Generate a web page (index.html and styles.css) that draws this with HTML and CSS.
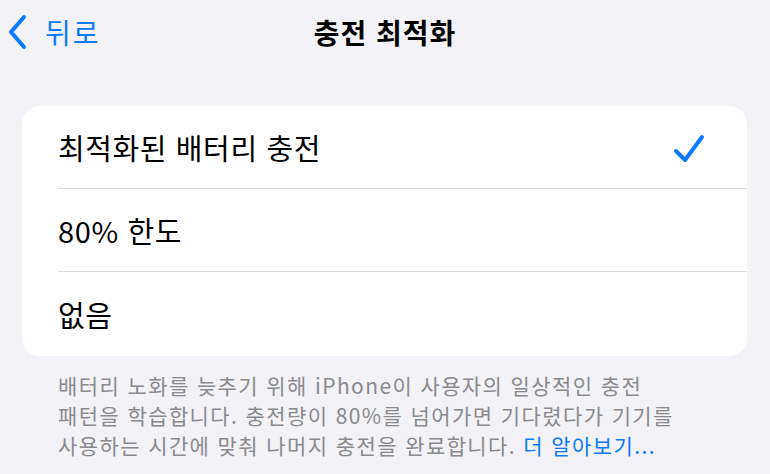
FILE: index.html
```html
<!DOCTYPE html>
<html lang="ko">
<head>
<meta charset="utf-8">
<link rel="stylesheet" href="styles.css">
</head>
<body>
<div class="screen">
  <header class="nav">
    <a class="back">
      <svg class="chev" width="22" height="38" viewBox="0 0 22 38"><path d="M18 4 L5 19 L18 34" fill="none" stroke="#0a7aff" stroke-width="4" stroke-linecap="round" stroke-linejoin="round"/></svg>
      <span class="back-label">뒤로</span>
    </a>
    <h1 class="title">충전 최적화</h1>
  </header>
  <section class="card">
    <div class="row"><span class="row-label">최적화된 배터리 충전</span>
      <svg class="check" width="32" height="30" viewBox="0 0 32 30"><path d="M3 17 L12 26 L29 3" fill="none" stroke="#0a7aff" stroke-width="4" stroke-linecap="round" stroke-linejoin="round"/></svg>
    </div>
    <div class="row"><span class="row-label">80% 한도</span></div>
    <div class="row last"><span class="row-label">없음</span></div>
  </section>
  <p class="footnote">배터리 노화를 늦추기 위해 iPhone이 사용자의 일상적인 충전<br>패턴을 학습합니다. 충전량이 80%를 넘어가면 기다렸다가 기기를<br>사용하는 시간에 맞춰 나머지 충전을 완료합니다. <a class="link">더 알아보기...</a></p>
</div>
</body>
</html>
```
FILE: styles.css
```css
html, body {
  margin: 0;
  padding: 0;
  background: #f2f2f7;
}
body {
  font-family: "Noto Sans CJK KR", "Noto Sans", sans-serif;
  color: #000;
  width: 770px;
  height: 474px;
  overflow: hidden;
}
.nav {
  position: relative;
  height: 64px;
  display: flex;
  align-items: center;
  justify-content: center;
}
.back {
  position: absolute;
  left: 6px;
  top: 13px;
  display: flex;
  align-items: center;
  gap: 17px;
  color: #0a7aff;
}
.chev { display: block; }
.back-label {
  font-size: 28px;
  line-height: 38px;
  letter-spacing: 2px;
}
.title {
  margin: 0;
  font-size: 28px;
  font-weight: 700;
  letter-spacing: 1px;
  line-height: 64px;
}
.card {
  margin: 42px 23px 0 22px;
  background: #fff;
  border-radius: 18px;
  overflow: hidden;
}
.row {
  height: 83px;
  margin-left: 36px;
  padding-right: 42px;
  display: flex;
  align-items: center;
  justify-content: space-between;
  border-bottom: 1px solid #dcdce0;
  box-sizing: border-box;
}
.row.last { border-bottom: none; height: 84px; }
.row-label {
  font-size: 29px;
  letter-spacing: 0.6px;
}
.check { display: block; margin-top: 3px; }
.footnote {
  margin: 15px 0 0 58px;
  font-size: 21px;
  line-height: 29.8px;
  color: #8a8a8e;
  letter-spacing: 1.4px;
}
.link { color: #0a7aff; }
```
